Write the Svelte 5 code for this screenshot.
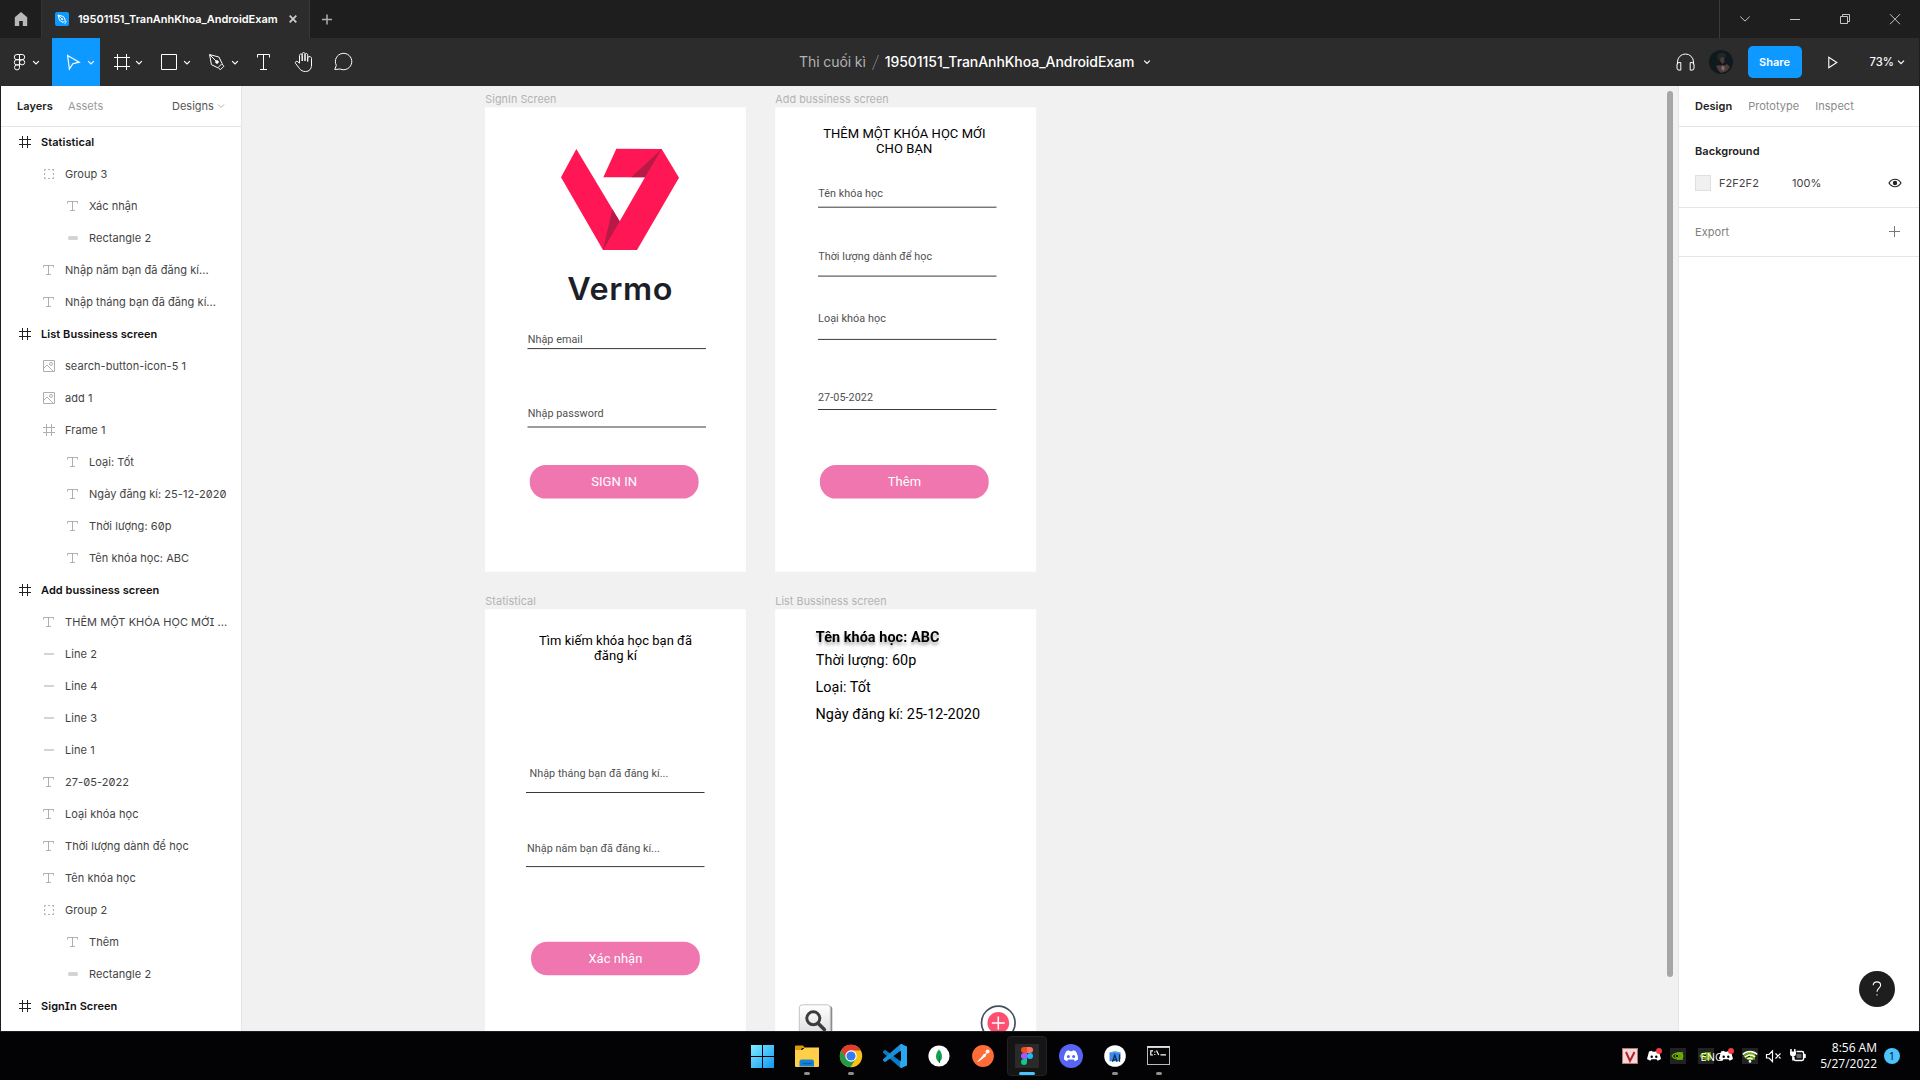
<script>
  const layers = [
    ['frame', 0, 'Statistical'],
    ['group', 1, 'Group 3'],
    ['text', 2, 'Xác nhận'],
    ['rect', 2, 'Rectangle 2'],
    ['text', 1, 'Nhập năm bạn đã đăng kí...'],
    ['text', 1, 'Nhập tháng bạn đã đăng kí...'],
    ['frame', 0, 'List Bussiness screen'],
    ['image', 1, 'search-button-icon-5 1'],
    ['image', 1, 'add 1'],
    ['frame', 1, 'Frame 1'],
    ['text', 2, 'Loại: Tốt'],
    ['text', 2, 'Ngày đăng kí: 25-12-2020'],
    ['text', 2, 'Thời lượng: 60p'],
    ['text', 2, 'Tên khóa học: ABC'],
    ['frame', 0, 'Add bussiness screen'],
    ['text', 1, 'THÊM MỘT KHÓA HỌC MỚI ...'],
    ['line', 1, 'Line 2'],
    ['line', 1, 'Line 4'],
    ['line', 1, 'Line 3'],
    ['line', 1, 'Line 1'],
    ['text', 1, '27-05-2022'],
    ['text', 1, 'Loại khóa học'],
    ['text', 1, 'Thời lượng dành để học'],
    ['text', 1, 'Tên khóa học'],
    ['group', 1, 'Group 2'],
    ['text', 2, 'Thêm'],
    ['rect', 2, 'Rectangle 2'],
    ['frame', 0, 'SignIn Screen'],
  ];

  // Canvas nodes: x, baseline, width, class, text
  const texts = [
    [485.3, 103.3, 71.2, 'label', 'SignIn Screen'],
    [775.3, 103.3, 113.4, 'label', 'Add bussiness screen'],
    [485.3, 605.3, 50.6, 'label', 'Statistical'],
    [775.3, 605.3, 111.3, 'label', 'List Bussiness screen'],
    [527.7, 343.4, 55, 'field', 'Nhập email'],
    [527.7, 417.4, 76, 'field', 'Nhập password'],
    [591.2, 486, 46, 'btn', 'SIGN IN'],
    [823.2, 138.2, 162.4, 'title', 'THÊM MỘT KHÓA HỌC MỚI'],
    [876, 153.3, 56.4, 'title', 'CHO BẠN'],
    [818.2, 197, 64.8, 'field', 'Tên khóa học'],
    [818.2, 260.4, 114, 'field', 'Thời lượng dành để học'],
    [818, 322.4, 68, 'field', 'Loại khóa học'],
    [818, 401.4, 55, 'field', '27-05-2022'],
    [887.8, 486, 33.3, 'btn', 'Thêm'],
    [539, 645.4, 153, 'title', 'Tìm kiếm khóa học bạn đã'],
    [594, 660.4, 43, 'title', 'đăng kí'],
    [529.4, 777.3, 139, 'field', 'Nhập tháng bạn đã đăng kí...'],
    [527, 852, 133, 'field', 'Nhập năm bạn đã đăng kí...'],
    [588.4, 962.8, 54, 'btn', 'Xác nhận'],
    [815.8, 641.5, 123.6, 'item bold', 'Tên khóa học: ABC'],
    [815.8, 665, 100.5, 'item', 'Thời lượng: 60p'],
    [815.5, 692, 55.3, 'item', 'Loại: Tốt'],
    [815.5, 719.4, 164.6, 'item', 'Ngày đăng kí: 25-12-2020'],
  ];
  const frames = [[485, 107.3], [775.2, 107.3], [485, 609.3], [775.2, 609.3]];
  const rules = [
    [527.5, 348.6], [527.5, 427], [818, 207.2], [818, 276.1],
    [818, 339.4], [818, 409.5], [526, 792.5], [526, 866.6],
  ];
  const buttons = [[529.8, 465], [819.9, 465], [531.1, 941.7]];
</script>

{#snippet chev(x, y)}
  <path d="M{x - 2.9} {y - 1.4}l2.9 2.9 2.9-2.9" />
{/snippet}

<div class="screen">
  <header class="titlebar">
    <div class="home">
      <svg width="40" height="38" viewBox="1 0 40 38"><path fill="#b8b8b8" d="M21 12l6.2 5.3V26h-4.400v-5h-3.600v5h-4.400v-8.700z" /></svg>
    </div>
    <div class="tab">
      <svg width="14" height="14" viewBox="0 0 14 14"><rect width="14" height="14" rx="2" fill="#0d99ff" /><g fill="none" stroke="#fff" stroke-width="1"><path d="M3 3l5.400 1.500 2 3.600-2.300 2.300-3.600-2zM3 3l4 4" /><path d="M10.400 9l1 1-1.600 1.500-1-1" /></g><circle cx="7.200" cy="7.200" r="1" fill="#fff" /></svg>
      <span class="tabname">19501151_TranAnhKhoa_AndroidExam</span>
      <svg class="close" width="8" height="8" viewBox="0 0 8 8"><path d="M.7.7l6.600 6.600M7.300.7L.7 7.300" stroke="#cfcfcf" stroke-width="1.700" /></svg>
    </div>
    <svg class="newtab" width="34" height="38" viewBox="310 0 34 38"><path d="M322 19.500h10M327 14.500v10" stroke="#b0b0b0" stroke-width="1.500" /></svg>
    <div class="winctl">
      <svg width="199" height="38" viewBox="1720 0 199 38" fill="none" stroke="#c4c4c4"><path d="M1740.300 16.600l4.700 4.500 4.700-4.500M1790 19.500h10M1890 14.200l10 10M1900 14.200l-10 10" /><path d="M1840.500 16.500h7v7h-7zM1842.500 16.500v-2h7v7h-2" /></svg>
    </div>
  </header>

  <nav class="toolbar">
    <div class="tools">
      <svg width="51" height="48" viewBox="1 38 51 48"><path d="M19.500 54.500h-2.600a2.600 2.600 0 000 5.200h2.600zM19.500 54.500h2.600a2.600 2.600 0 010 5.200h-2.600zM19.500 59.700h-2.600a2.600 2.600 0 000 5.200h2.600zM19.500 64.900h-2.600a2.500 2.500 0 102.600 2.500z" /><circle cx="22.100" cy="62.300" r="2.600" /><g class="cv">{@render chev(36, 62.500)}</g></svg>
      <svg class="active" width="48" height="48" viewBox="52 38 48 48"><path stroke-width="1.200" d="M67.600 55.500l11.600 6.700-6.300 1.500-3.500 5.400z" /><g class="cv">{@render chev(91, 62.500)}</g></svg>
      <svg width="48" height="48" viewBox="100 38 48 48"><path d="M117.500 54v16M126.500 54v16M114 57.500h16M114 66.500h16" /><g class="cv">{@render chev(139, 62.500)}</g></svg>
      <svg width="48" height="48" viewBox="148 38 48 48"><path d="M161.500 54.500h15v15h-15z" /><g class="cv">{@render chev(187, 62.500)}</g></svg>
      <svg width="48" height="48" viewBox="196 38 48 48"><path d="M209.600 54.600l9.300 2.400 3.200 6.500-4.300 4.300-6.400-3.200zM209.600 54.600l6.500 6.500M218.400 68.200l2.200 1.400 3.200-3.300-1.600-2.200" /><circle cx="217" cy="62" r="1.300" fill="#fff" /><g class="cv">{@render chev(235, 62.500)}</g></svg>
      <svg width="40" height="48" viewBox="244 38 40 48"><path d="M257.500 57.500v-3h12v3M263.500 54.500v15M260 69.500h7" /></svg>
      <svg width="40" height="48" viewBox="284 38 40 48"><path d="M299.500 63.200v-7.700c0-2 2.700-2 2.700 0v5.500v-7c0-2 2.800-2 2.800 0v7v-6c0-2 2.700-2 2.700 0v6.500v-3.500c0-2 3.800-2 3.800 0.500v6.500c0 4-2.300 6.500-6 6.500-3 0-4.500-1-6-3l-4-5.200c-.8-1.500 1-2.600 2.300-1.600z" /></svg>
      <svg width="40" height="48" viewBox="324 38 40 48"><path d="M334.800 69.500l1.500-4.200a8.200 8.200 0 1 1 3.900 3.700z" /></svg>
    </div>
    <div class="crumb"><span class="proj">Thi cuối kì</span><svg width="7" height="17" viewBox="0 0 7 17"><path d="M6.500 1L.5 16" stroke="#777" fill="none" /></svg><span class="file">19501151_TranAnhKhoa_AndroidExam</span><svg class="ccv" width="8" height="8" viewBox="0 0 8 8"><path d="M1.200 2.600L4 5.400l2.800-2.800" fill="none" stroke="#fff" stroke-width="1.200" /></svg></div>
    <div class="acts">
      <svg class="phones" width="19" height="18" viewBox="0 0 19 18" fill="none" stroke="#fff"><path d="M1.500 11.500V9a8 8 0 0 1 16 0v2.500M4.800 9.500v7.600H3a2 2 0 0 1-2-2v-3.500a2 2 0 0 1 2-2zM14.200 9.500v7.600H16a2 2 0 0 0 2-2v-3.500a2 2 0 0 0-2-2z" /></svg>
      <svg class="avatar" width="24" height="24" viewBox="0 0 24 24"><circle cx="12" cy="12" r="12" fill="#101a1e" /><path d="M8 6c2-4 7-4 9-1l-1 4-3 3-4-2z" fill="#202827" /><path d="M12 7l3 1 .500 4-2 2-2.500-3zM7 16l3-1 4 1 4-2 3 3-3 4-6 2-3-3z" fill="#4a3c39" /><path d="M13 15l3 2-1 4-3-2z" fill="#806a60" /></svg>
      <span class="share">Share</span>
      <svg class="play" width="10" height="13" viewBox="0 0 10 13"><path d="M.8 1.200v10.600l8-5.300z" fill="none" stroke="#fff" stroke-width="1.100" /></svg>
      <span class="zoom">73%</span>
      <svg class="zcv" width="8" height="8" viewBox="0 0 8 8"><path d="M1 2.600L4 5.600l3-3" fill="none" stroke="#fff" stroke-width="1.200" /></svg>
    </div>
  </nav>

  <main class="body">
    <aside class="left">
      <div class="tabs">
        <b>Layers</b><span class="assets">Assets</span><span class="pages">Designs</span>
        <svg width="8" height="8" viewBox="0 0 8 8"><path d="M1 2.500l3 3 3-3" fill="none" stroke="#b3b3b3" /></svg>
      </div>
      {#each layers as [kind, depth, name]}
        <div class="layer d{depth}">
          <svg width="12" height="12" viewBox="0 0 12 12" fill="none" stroke={depth === 0 ? '#222' : '#b0b0b0'}>
            {#if kind === 'frame'}<path d="M3.500 0v12M8.500 0v12M0 3.500h12M0 8.500h12" />
            {:else if kind === 'group'}<path d="M1.500 3v-1.500H3M5 1.500h2M9 1.500h1.500V3M10.500 5v2M10.500 9v1.500H9M7 10.500H5M3 10.500H1.500V9M1.500 7V5" />
            {:else if kind === 'text'}<path d="M.5 3.500v-2h10v2M5.500 1.500v9M3 10.500h5" />
            {:else if kind === 'image'}<path d="M.5.5h11v11h-11zM1 8l3-3 6 6" /><circle cx="8" cy="3.900" r="1.500" />
            {:else if kind === 'line'}<path d="M1 6h10" stroke="#d4d4d4" stroke-width="2" />
            {:else}<rect x="1" y="4" width="10" height="4" rx="1.500" fill="#d4d4d4" stroke="none" />{/if}
          </svg>
          <span>{name}</span>
        </div>
      {/each}
    </aside>

    <section class="canvas">
      <svg width="1436" height="945" viewBox="242 86 1436 945">
        {#each frames as [x, y]}<rect {x} {y} width="261" height="464.400" fill="#fff" />{/each}
        <g transform="translate(480 80) scale(.33333)">
          <path fill="#ff1654" d="M289 207L419 424L495 292H370L409 206L545 207L597 293L471 510H369L243 292z" />
          <path fill="#b81a48" d="M545 207L495 292H454zM397 388L419 424L369 510z" />
        </g>
        <text class="brand" x="567.200" y="300" textLength="106" lengthAdjust="spacingAndGlyphs">Vermo</text>
        {#each rules as [x, y]}<path d="M{x} {y}h178.500" stroke="#3a3a3a" />{/each}
        {#each buttons as [x, y]}<rect {x} {y} width="168.800" height="33.600" rx="16" fill="#ef76ae" />{/each}
        {#each texts as [x, y, w, cls, t]}
          <text class={cls} {x} {y} textLength={w} lengthAdjust="spacingAndGlyphs">{t}</text>
        {/each}
        <defs><linearGradient id="key" x2="0" y2="1"><stop stop-color="#fff" /><stop offset="1" stop-color="#d9dadc" /></linearGradient></defs>
        <rect x="800.500" y="1006" width="31.800" height="33" rx="3" fill="#8b8b8b" />
        <rect x="799.300" y="1004.800" width="31" height="33" rx="3" fill="url(#key)" stroke="#c4c4c4" />
        <circle cx="813.300" cy="1018.300" r="6.500" fill="none" stroke="#3f3b3c" stroke-width="3" />
        <path d="M818 1023.300l6.300 6.200" stroke="#3f3b3c" stroke-width="3.600" stroke-linecap="round" />
        <circle cx="998.300" cy="1022.900" r="16.800" fill="#fff" stroke="#465060" stroke-width="1.700" />
        <circle cx="998.300" cy="1022.900" r="10.900" fill="#ff5073" />
        <path d="M991.800 1022.900h13M998.300 1016.400v13" stroke="#fff" stroke-width="1.500" />
        <rect x="1667" y="91" width="6" height="886" rx="3" fill="#a6a6a6" />
      </svg>
    </section>

    <aside class="right">
      <div class="rtabs"><b>Design</b><span>Prototype</span><span>Inspect</span></div>
      <div class="bg">
        <b>Background</b>
        <div class="fill">
          <i class="swatch"></i><span class="hex">F2F2F2</span><span>100%</span>
          <svg width="14" height="10" viewBox="0 0 14 10"><path d="M1 5c3-5 9-5 12 0-3 5-9 5-12 0z" fill="none" stroke="#222" stroke-width="1.200" /><circle cx="7" cy="5" r="2.200" fill="#222" /></svg>
        </div>
      </div>
      <div class="export"><span>Export</span><svg width="11" height="11" viewBox="0 0 11 11"><path d="M0 5.500h11M5.500 0v11" stroke="#777" /></svg></div>
      <div class="help"><svg width="10" height="16" viewBox="0 0 10 16"><path d="M1.200 4.200C1.400-.2 8.600-.2 8.600 4.200c0 2.800-3.600 3-3.600 6.500M5 13.300v1.300" fill="none" stroke="#fff" stroke-width="1.100" /></svg></div>
    </aside>
  </main>

  <footer class="taskbar">
    <div class="apps">
      <div class="app"><svg viewBox="0 0 44 48"><defs><linearGradient id="win" x2="1" y2="1"><stop stop-color="#7df0ff" /><stop offset="1" stop-color="#1395f5" /></linearGradient></defs><path fill="url(#win)" d="M10 13h11v11h-11zM22 13h11v11h-11zM10 25h11v11h-11zM22 25h11v11h-11z" /></svg></div>
      <div class="app run"><svg viewBox="0 0 44 48"><path fill="#dc9a0b" d="M10 14.500q0-1 1-1h7l2 2.500h-3l-2 4h-5z" /><path fill="#ffcf48" d="M10 18h7l3-2.500H34V34q0 1-1 1H11q-1 0-1-1z" /><path fill="#1683d4" d="M14.500 34.500v-5q0-2 2-2h10.500q2 0 2 2v5z" /><path d="M17.500 31.500h9" stroke="#0c5ea5" stroke-width="1.500" /></svg></div>
      <div class="app run"><svg viewBox="0 0 44 48"><circle cx="22" cy="24" r="11.200" fill="#fbc116" /><path fill="#e33b2e" d="M12.300 18.400A11.200 11.200 0 0 1 31.700 18.400H22L17 27z" /><path fill="#229a48" d="M12.300 18.400L17.300 27 22 29.600 26.500 27 21.500 35.200A11.200 11.200 0 0 1 12.300 18.400z" /><circle cx="22" cy="24" r="5.700" fill="#fff" /><circle cx="22" cy="24" r="4.600" fill="#347af0" /></svg></div>
      <div class="app"><svg viewBox="0 0 44 48"><path fill="#0c7ac0" d="M10 19.500l2-1.700L30 31v4.500l-2.500.4L10 20.700z" /><path fill="#1b8ed8" d="M10 28.500l2 1.800L30 17v-4.500l-2.500-.4L10 27.300z" /><path fill="#2ba7ef" d="M28 12l6 2.500v19L28 36l-1-2V14z" /><path d="M28 18.700v10.600L21 24z" fill="#03060a" /></svg></div>
      <div class="app"><svg viewBox="0 0 44 48"><circle cx="22" cy="24" r="10.600" fill="#fff" /><path fill="#12a150" d="M22 17.500c4.500 5 3.500 10 0 13-3.500-3-4.500-8 0-13z" /><path d="M22.500 24v7" stroke="#087b39" /></svg></div>
      <div class="app"><svg viewBox="0 0 44 48"><circle cx="22" cy="24" r="10.900" fill="#ff6c37" /><path d="M17 29.500l5.500-7 3.500-2-1.500 4-5 3.700z" fill="#fff" /><path d="M16.500 30l6-6" stroke="#fff" /><circle cx="26.600" cy="19.500" r="2" fill="#fff" /></svg></div>
      <div class="app on"><svg viewBox="0 0 44 48"><rect x="10" y="12" width="24" height="24" rx="1" fill="#2a2a2a" /><path fill="#f24e1e" d="M22 15h-3a3 3 0 0 0 0 6h3z" /><path fill="#ff7262" d="M22 15h3a3 3 0 0 1 0 6h-3z" /><path fill="#a259ff" d="M22 21h-3a3 3 0 0 0 0 6h3z" /><circle cx="25" cy="24" r="3" fill="#1abcfe" /><path fill="#0acf83" d="M22 27h-3a3 3 0 1 0 3 3z" /></svg></div>
      <div class="app"><svg viewBox="0 0 44 48"><circle cx="22" cy="24" r="12" fill="#5865f2" /><path fill="#fff" d="M17.500 19l2.500-.7.800 1h2.400l.8-1 2.500.7c1.800 2.700 2.800 5.500 2.500 8.500l-3 1.700-1.200-1.700h-5.600L18 29.200l-3-1.700c-.3-3 .7-5.800 2.500-8.500z" /><circle cx="19.400" cy="24.500" r="1.500" fill="#5865f2" /><circle cx="24.600" cy="24.500" r="1.500" fill="#5865f2" /></svg></div>
      <div class="app run"><svg viewBox="0 0 44 48"><circle cx="22" cy="24" r="10.800" fill="#fff" /><path fill="#3ddc84" d="M18 20.500a5 3.800 0 0 1 8 0z" /><path fill="#4285f4" d="M16.500 20.300h11v6.500l-2 2.400h-9z" /><path fill="none" stroke="#073042" stroke-width="1.300" d="M19.500 29.800l2.300-6.800 2.300 6.800M20.500 27.800h3M26.500 22.500v7.300" /></svg></div>
      <div class="app run"><svg viewBox="0 0 44 48"><rect x="10.500" y="14.500" width="22" height="18" fill="#050505" stroke="#b8bcc0" /><path d="M10.500 15h22" stroke="#e2e5e9" stroke-width="1.800" /><path d="M16 18.800h-2.200v4.200H16M17.800 19.500v1M17.800 22v1M19.500 18.500l2.200 4.500M23.500 22.800h5.500" stroke="#fff" fill="none" stroke-width="1.200" /></svg></div>
    </div>
    <div class="tray">
      <svg width="196" height="48" viewBox="1614 1032 196 48">
        <rect x="1622.500" y="1048.500" width="15" height="15" fill="#f2dada" stroke="#b97474" /><path d="M1626 1052l4 9 4.500-9" fill="none" stroke="#b51f26" stroke-width="2" />
        <rect x="1670" y="1048" width="16" height="16" fill="#222" /><rect x="1698" y="1048" width="16" height="16" fill="#222" /><rect x="1742" y="1048" width="16" height="16" fill="#222" />
        {#each [1670, 1698, 1742] as x}<path d="M{x + 2} 1056c3-4 8-4 11 0-3 4-8 4-11 0z" fill="none" stroke="#76b900" stroke-width="1.200" /><path d="M{x + 7} 1052h6v8h-6z" fill="#76b900" opacity=".75" /><circle cx={x + 7} cy="1056" r="1.800" fill="#182000" stroke="#76b900" />{/each}
        <text class="eng" x="1700.500" y="1061">ENG</text>
        {#each [1654, 1726] as x}<path fill="#fff" d="M{x - 5} 1051.500l3-.7.700 1h2.600l.700-1 3 .7 2 7.500-3.300 1.800-1.200-1.600h-5l-1.200 1.600-3.300-1.800z" /><circle cx={x - 2.300} cy="1056.700" r="1.200" fill="#000" /><circle cx={x + 2.300} cy="1056.700" r="1.200" fill="#000" /><circle cx={x + 5} cy="1051" r="3" fill="#f23f42" />{/each}
        <path d="M1742.800 1054.500a10.300 10.300 0 0 1 14.400 0M1745 1057a7.200 7.200 0 0 1 10 0M1747.400 1059.300a4 4 0 0 1 5.200 0" fill="none" stroke="#fff" stroke-width="1.500" /><circle cx="1750" cy="1061.400" r="1.300" fill="#fff" />
        <path d="M1766.500 1054.500h2.500l3.500-3.500v10.500l-3.500-3.500h-2.500zM1775.500 1053.500l5 5M1780.500 1053.500l-5 5" fill="none" stroke="#fff" stroke-width="1.200" />
        <path d="M1796.500 1051.600h5.500q1.600 0 1.600 1.600v5.600q0 1.600-1.600 1.600h-6.500q-1.600 0-1.600-1.600V1057M1805 1054v4M1791 1049v3M1794.800 1049v3M1792.900 1056v4.500" fill="none" stroke="#fff" stroke-width="1.500" /><path d="M1790 1051.500h6v2a3 3 0 0 1-6 0z" fill="#fff" /><path d="M1796.500 1053.800h5v4.400h-5z" fill="#666" />
      </svg>
      <div class="clock"><span>8:56 AM</span><span>5/27/2022</span></div>
      <span class="badge">1</span>
    </div>
  </footer>
</div>

<style>
  :global(body) { margin: 0; background: #000; }
  .screen { width: 1920px; height: 1080px; display: flex; flex-direction: column; overflow: hidden; font: 11px/16px Inter, "Noto Sans", sans-serif; letter-spacing: .055px; color: #444; }
  svg { display: block; flex: none; }
  b { font-weight: 600; color: #222; }
  .titlebar { height: 38px; box-sizing: border-box; padding-left: 1px; background: #1e1e1e; display: flex; }
  .home { width: 40px; border-right: 1px solid #333; }
  .tab { width: 268px; box-sizing: border-box; background: #2c2c2c; border-right: 1px solid #383838; display: flex; align-items: center; padding-left: 13px; color: #fff; font-weight: 600; }
  .tabname { margin-left: 9px; width: 200px; white-space: nowrap; letter-spacing: -.04px; }
  .close { margin-left: 11px; }
  .winctl { margin-left: auto; width: 199px; border-left: 1px solid #3a3a3a; padding-right: 1px; }
  .toolbar { height: 48px; flex: none; background: #2c2c2c; display: grid; grid-template-columns: 799px 1fr 270px; align-items: center; border-right: 1px solid #1e1e1e; }
  .tools { display: flex; padding-left: 1px; }
  .tools svg { fill: none; stroke: #fff; }
  .cv { stroke-width: 1.2; }
  .active { background: #0d99ff; }
  .crumb { display: flex; align-items: center; color: #fff; font-size: 14px; letter-spacing: -.09px; white-space: nowrap; }
  .proj { color: #b3b3b3; margin-right: 6px; }
  .file { margin-left: 6px; width: 250px; font-weight: 500; letter-spacing: -.06px; }
  .ccv { margin-left: 8px; }
  .acts { display: flex; align-items: center; color: #fff; padding-left: 26.5px; }
  .avatar { margin-left: 14px; }
  .share { margin-left: 15px; width: 54px; height: 32px; line-height: 32px; border-radius: 5px; background: #0d99ff; text-align: center; font-weight: 600; flex: none; }
  .play { margin-left: 26px; }
  .zoom { margin-left: 32px; font-weight: 500; font-size: 11.2px; width: 23px; }
  .zcv { margin-left: 4px; }
  .body { height: 945px; display: flex; border: solid #1e1e1e; border-width: 0 1px 1px; }
  .left { width: 240px; border-right: 1px solid #e5e5e5; background: #fff; flex: none; font-feature-settings: "zero", "cv08"; }
  .tabs { height: 40px; border-bottom: 1px solid #e5e5e5; display: flex; align-items: center; padding-left: 16px; }
  .assets { margin-left: 16px; width: 104px; color: #999; }
  .pages { width: 42px; color: #555; letter-spacing: 0; }
  .tabs svg { margin-left: 3px; }
  .tabs b { width: 35px; }
  .layer { height: 32px; display: flex; align-items: center; gap: 10px; padding-left: 18px; white-space: nowrap; position: relative; top: -1px; }
  .d1 { padding-left: 42px; }
  .d2 { padding-left: 66px; }
  .d0 { font-weight: 600; color: #111; }
  .canvas { flex: 1; background: #f1f1f1; overflow: hidden; }
  .label { font-size: 11px; fill: #b3b3b3; }
  .field { font: 11px Roboto, sans-serif; fill: #505050; }
  .btn { font: 13.2px Roboto, sans-serif; fill: #fff; }
  .title { font: 13.2px Roboto, sans-serif; fill: #000; }
  .item { font: 14.6px Roboto, sans-serif; fill: #000; }
  .bold { font-weight: 700; filter: drop-shadow(0 3px 1.5px rgba(0, 0, 0, .35)); }
  .brand { font: 600 31px Inter, sans-serif; letter-spacing: .6px; fill: #1c1e28; }
  .right { width: 240px; border-left: 1px solid #e5e5e5; background: #fff; flex: none; position: relative; }
  .rtabs { height: 40px; border-bottom: 1px solid #e5e5e5; display: flex; align-items: center; gap: 16px; padding-left: 16px; color: #8a8a8a; letter-spacing: .03px; }
  .bg { box-sizing: border-box; border-bottom: 1px solid #e5e5e5; padding: 16px 17px 0 16px; height: 81px; }
  .fill { display: flex; align-items: center; margin-top: 16px; }
  .swatch { width: 14px; height: 14px; border: 1px solid #e0e0e0; background: #f0f0f0; }
  .hex { margin-left: 8px; width: 73px; }
  .fill svg { margin-left: auto; }
  .export { height: 48px; border-bottom: 1px solid #e5e5e5; display: flex; align-items: center; justify-content: space-between; padding: 0 19px 0 16px; color: #808080; }
  .export svg { margin-top: -1px; }
  .help { position: absolute; right: 24px; bottom: 24px; width: 36px; height: 36px; border-radius: 50%; background: #1e1e1e; display: flex; align-items: center; justify-content: center; }
  .taskbar { height: 48px; flex: none; background: #030305; display: flex; padding-left: 741px; }
  .apps { display: flex; }
  .app { width: 44px; height: 48px; position: relative; }
  .app svg { width: 44px; height: 48px; position: relative; }
  .run::after, .on::after { content: ""; position: absolute; left: 19px; bottom: 5px; width: 6px; height: 3px; border-radius: 2px; background: #8e8e8e; }
  .on::after { left: 14px; width: 16px; background: #4cc2ff; }
  .on::before { content: ""; position: absolute; left: 2px; top: 4px; width: 38px; height: 38px; border: 1px solid #222; border-radius: 4px; background: #151515; }
  .tray { margin-left: auto; display: flex; align-items: center; color: #fff; padding-right: 20px; }
  .clock { width: 67px; display: flex; flex-direction: column; text-align: right; font: 12px/16px "Open Sans", "Noto Sans", sans-serif; letter-spacing: 0; }
  .badge { margin-left: 7px; width: 16px; height: 16px; border-radius: 50%; background: #4cc2ff; color: #111; text-align: center; font: 11px/16px "Open Sans", sans-serif; }
  .eng { font: 11px "Open Sans", sans-serif; fill: #fff; }
</style>
